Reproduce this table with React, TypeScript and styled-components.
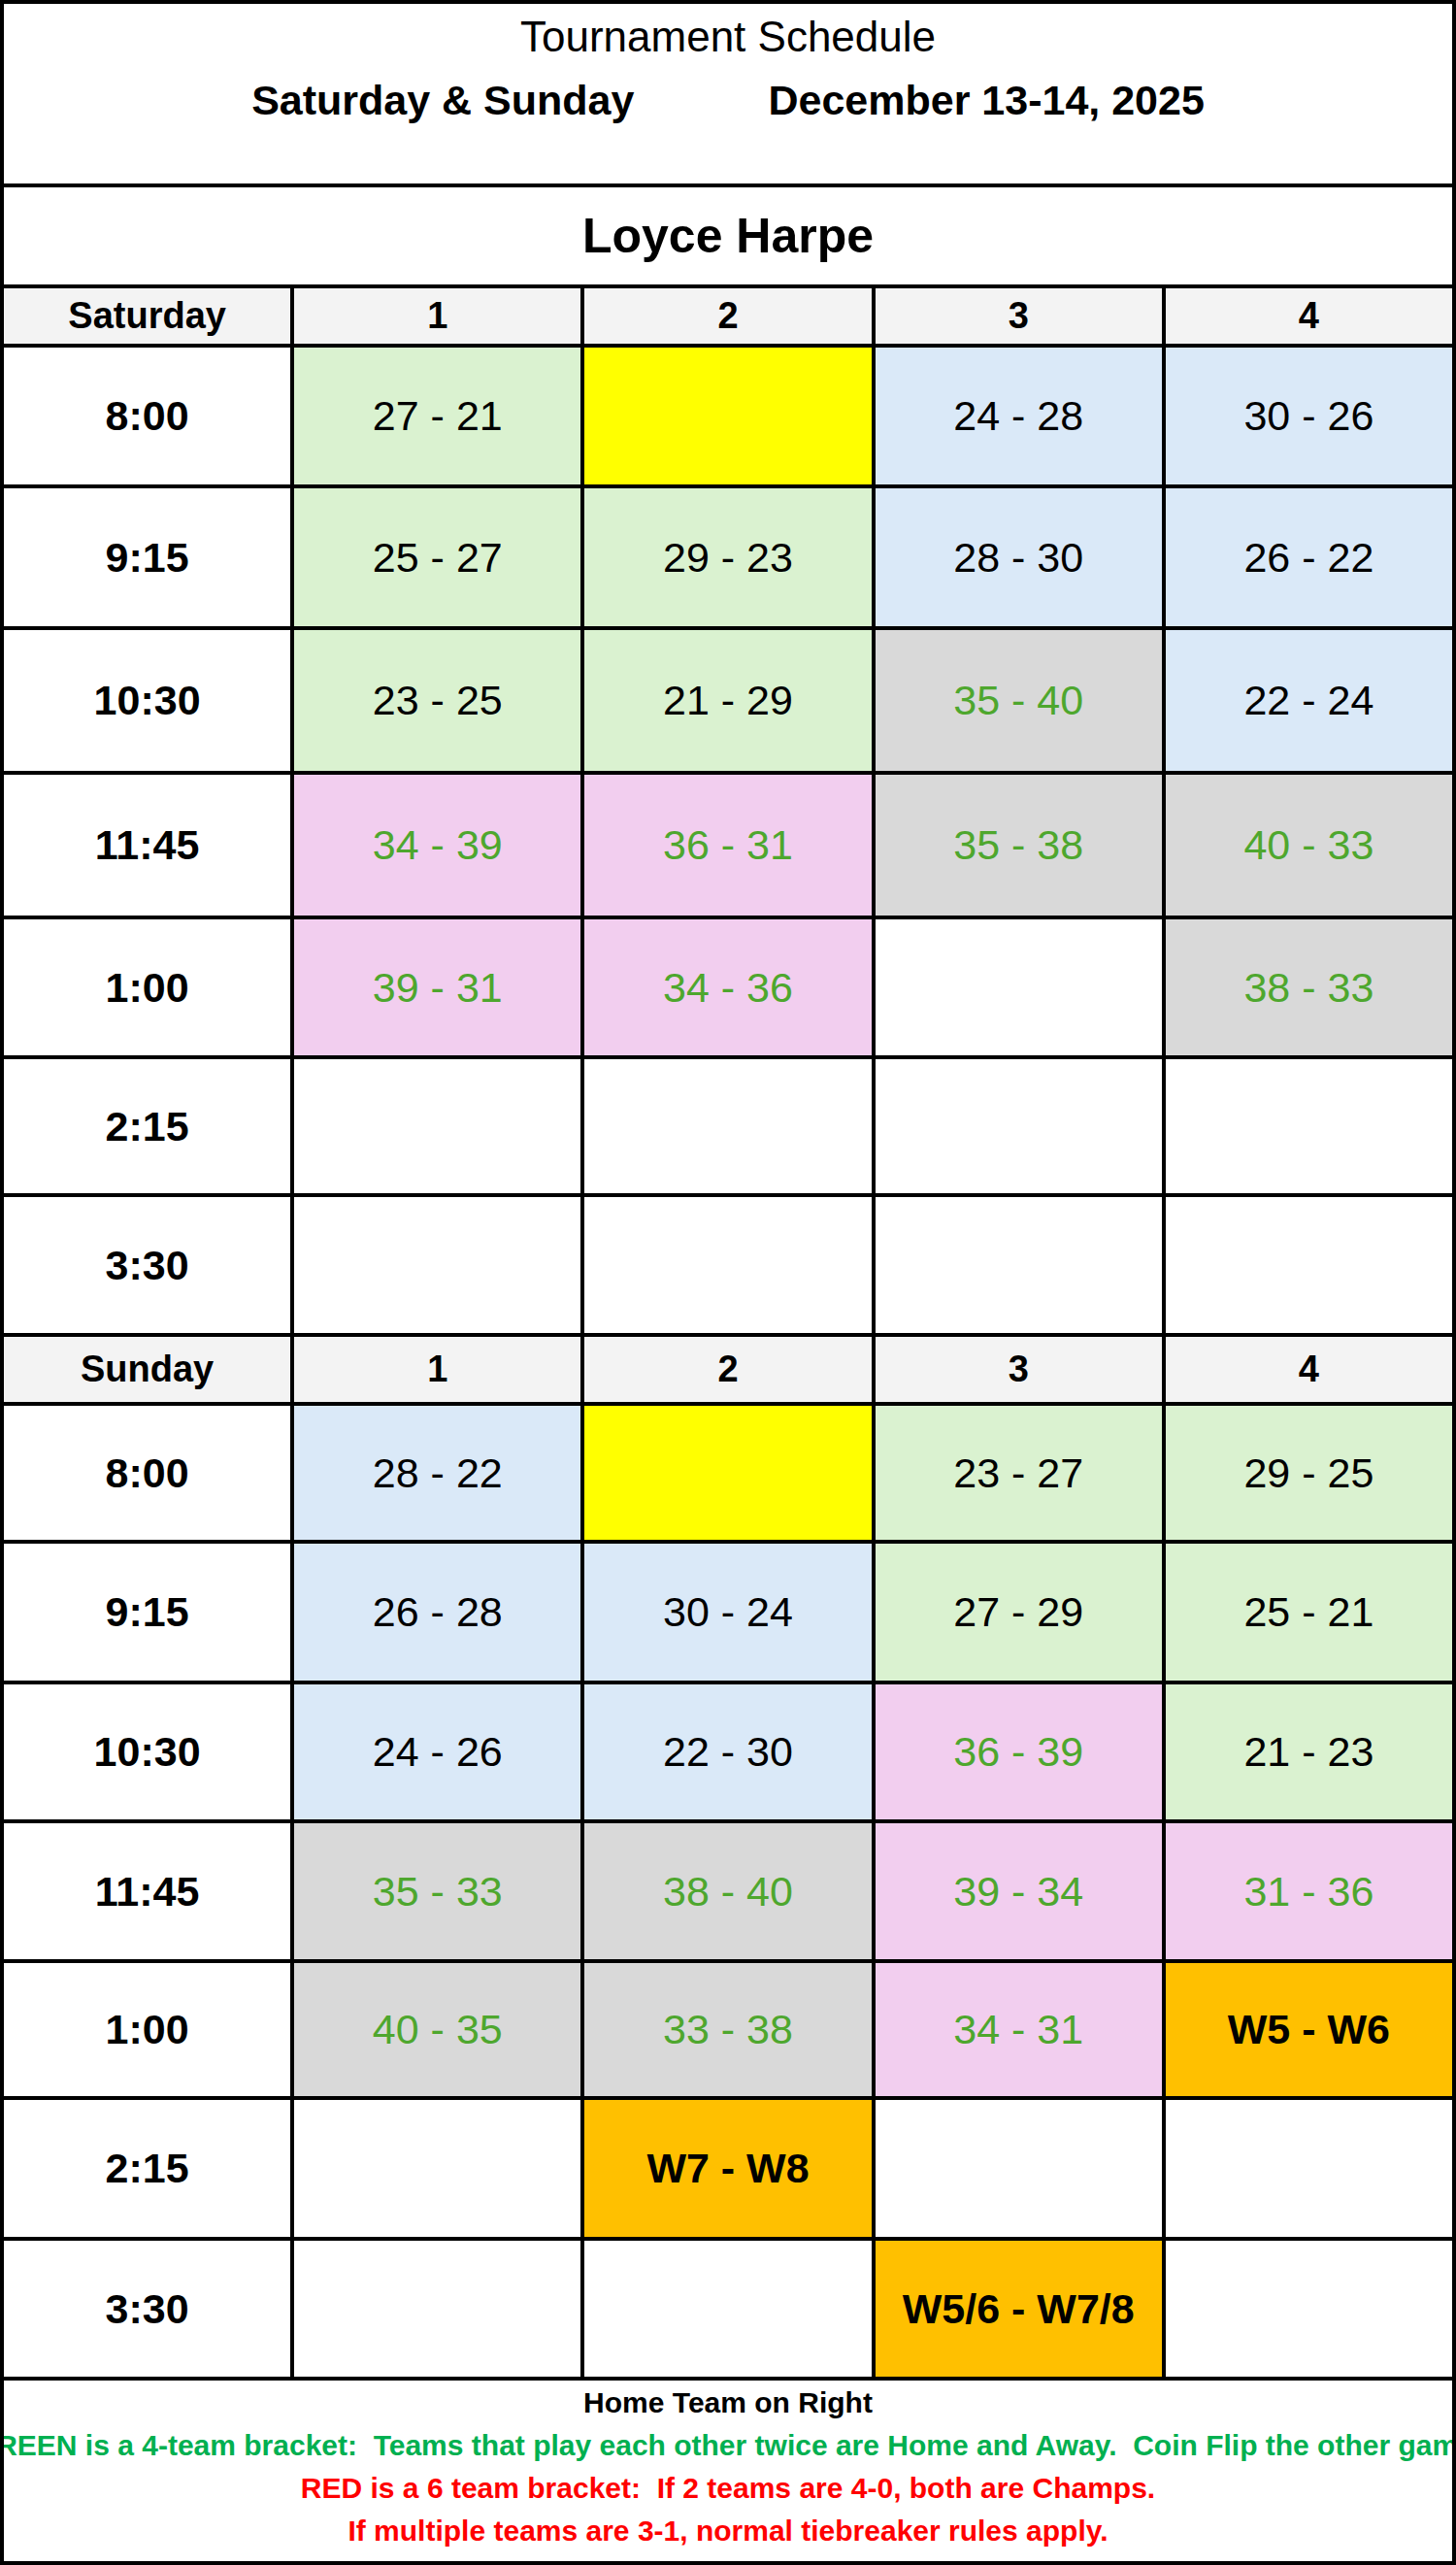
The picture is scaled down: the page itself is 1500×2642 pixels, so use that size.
import React from 'react';
import styled, { createGlobalStyle } from 'styled-components';

const GlobalStyle = createGlobalStyle`
  html, body {
    margin: 0;
    padding: 0;
    background: #ffffff;
  }
  body {
    font-family: "Liberation Sans", Arial, sans-serif;
    color: #000;
  }
`

// interior heights of each sheet row, top to bottom (lines are 4px)
const ROW_HEIGHTS = [185, 100, 57, 141, 142, 145, 145, 140, 138, 140, 67, 138, 141, 139, 140, 137, 141, 140, 186];

const Sheet = styled.div`
  width: 1500px;
  box-sizing: border-box;
  display: grid;
  grid-template-columns: repeat(5, 1fr);
  grid-template-rows: ${ROW_HEIGHTS.map((h) => `${h}px`).join(' ')};
  gap: 4px;
  padding: 4px;
  background: #000;
`

const Banner = styled.div`
  grid-column: 1 / -1;
  background: #fff;
  display: flex;
  flex-direction: column;
  align-items: center;
  padding-top: 12px;
  gap: 22px;
`

const Title = styled.div`
  font-size: 44px;
  line-height: 1;
  font-weight: 400;
`

const DateLine = styled.div`
  display: flex;
  gap: 138px;
  font-size: 43px;
  line-height: 1;
  font-weight: 700;
`

const Venue = styled.div`
  grid-column: 1 / -1;
  background: #fff;
  display: flex;
  align-items: center;
  justify-content: center;
  font-size: 50px;
  font-weight: 700;
`

const Cell = styled.div`
  display: flex;
  align-items: center;
  justify-content: center;
  white-space: nowrap;
`

const HeadCell = styled(Cell)`
  background: #f3f3f3;
  font-size: 38px;
  font-weight: 700;
`

const TimeCell = styled(Cell)`
  background: #fff;
  font-size: 43px;
  font-weight: 700;
`

const FILLS = {
  white: '#ffffff',
  green: '#daf2d0',
  blue: '#dae9f8',
  gray: '#d9d9d9',
  pink: '#f2ceef',
  yellow: '#ffff00',
  orange: '#ffc000',
};

type Fill = keyof typeof FILLS;

const GameCell = styled(Cell)<{ $fill: Fill; $pool?: boolean; $final?: boolean }>`
  background: ${(p) => FILLS[p.$fill]};
  font-size: 43px;
  font-weight: ${(p) => (p.$final ? 700 : 400)};
  color: ${(p) => (p.$pool ? '#4ea72e' : '#000')};
`

const Notes = styled.div`
  grid-column: 1 / -1;
  background: #fff;
  overflow: hidden;
  display: flex;
  flex-direction: column;
  align-items: center;
  padding-top: 1px;
`

const NoteLine = styled.div<{ $color: string }>`
  font-size: 30px;
  line-height: 44px;
  font-weight: 700;
  white-space: pre;
  color: ${(p) => p.$color};
`

type Game = { text?: string; fill: Fill; pool?: boolean; final?: boolean };
type Slot = { time: string; games: Game[] };

const E: Game = { fill: 'white' };
const Y: Game = { fill: 'yellow' };
const g = (text: string, fill: Fill, pool = false): Game => ({ text, fill, pool });
const w = (text: string): Game => ({ text, fill: 'orange', final: true });

const days: { name: string; slots: Slot[] }[] = [
  {
    name: 'Saturday',
    slots: [
      { time: '8:00', games: [g('27 - 21', 'green'), Y, g('24 - 28', 'blue'), g('30 - 26', 'blue')] },
      { time: '9:15', games: [g('25 - 27', 'green'), g('29 - 23', 'green'), g('28 - 30', 'blue'), g('26 - 22', 'blue')] },
      { time: '10:30', games: [g('23 - 25', 'green'), g('21 - 29', 'green'), g('35 - 40', 'gray', true), g('22 - 24', 'blue')] },
      { time: '11:45', games: [g('34 - 39', 'pink', true), g('36 - 31', 'pink', true), g('35 - 38', 'gray', true), g('40 - 33', 'gray', true)] },
      { time: '1:00', games: [g('39 - 31', 'pink', true), g('34 - 36', 'pink', true), E, g('38 - 33', 'gray', true)] },
      { time: '2:15', games: [E, E, E, E] },
      { time: '3:30', games: [E, E, E, E] },
    ],
  },
  {
    name: 'Sunday',
    slots: [
      { time: '8:00', games: [g('28 - 22', 'blue'), Y, g('23 - 27', 'green'), g('29 - 25', 'green')] },
      { time: '9:15', games: [g('26 - 28', 'blue'), g('30 - 24', 'blue'), g('27 - 29', 'green'), g('25 - 21', 'green')] },
      { time: '10:30', games: [g('24 - 26', 'blue'), g('22 - 30', 'blue'), g('36 - 39', 'pink', true), g('21 - 23', 'green')] },
      { time: '11:45', games: [g('35 - 33', 'gray', true), g('38 - 40', 'gray', true), g('39 - 34', 'pink', true), g('31 - 36', 'pink', true)] },
      { time: '1:00', games: [g('40 - 35', 'gray', true), g('33 - 38', 'gray', true), g('34 - 31', 'pink', true), w('W5 - W6')] },
      { time: '2:15', games: [E, w('W7 - W8'), E, E] },
      { time: '3:30', games: [E, E, w('W5/6 - W7/8'), E] },
    ],
  },
];

const App = () => {
  return (
    <>
      <GlobalStyle />
      <Sheet>
        <Banner>
          <Title>Tournament Schedule</Title>
          <DateLine>
            <span>Saturday &amp; Sunday</span>
            <span>December 13-14, 2025</span>
          </DateLine>
        </Banner>
        <Venue>Loyce Harpe</Venue>

        {days.map((day) => (
          <React.Fragment key={day.name}>
            <HeadCell>{day.name}</HeadCell>
            {[1, 2, 3, 4].map((n) => (
              <HeadCell key={n}>{n}</HeadCell>
            ))}
            {day.slots.map((slot) => (
              <React.Fragment key={slot.time}>
                <TimeCell>{slot.time}</TimeCell>
                {slot.games.map((game, i) => (
                  <GameCell key={i} $fill={game.fill} $pool={game.pool} $final={game.final}>
                    {game.text}
                  </GameCell>
                ))}
              </React.Fragment>
            ))}
          </React.Fragment>
        ))}

        <Notes>
          <NoteLine $color="#000">Home Team on Right</NoteLine>
          <NoteLine $color="#00b050">
            {'GREEN is a 4-team bracket:  Teams that play each other twice are Home and Away.  Coin Flip the other game.'}
          </NoteLine>
          <NoteLine $color="#ff0000">{'RED is a 6 team bracket:  If 2 teams are 4-0, both are Champs.'}</NoteLine>
          <NoteLine $color="#ff0000">If multiple teams are 3-1, normal tiebreaker rules apply.</NoteLine>
        </Notes>
      </Sheet>
    </>
  );
};

export default App
